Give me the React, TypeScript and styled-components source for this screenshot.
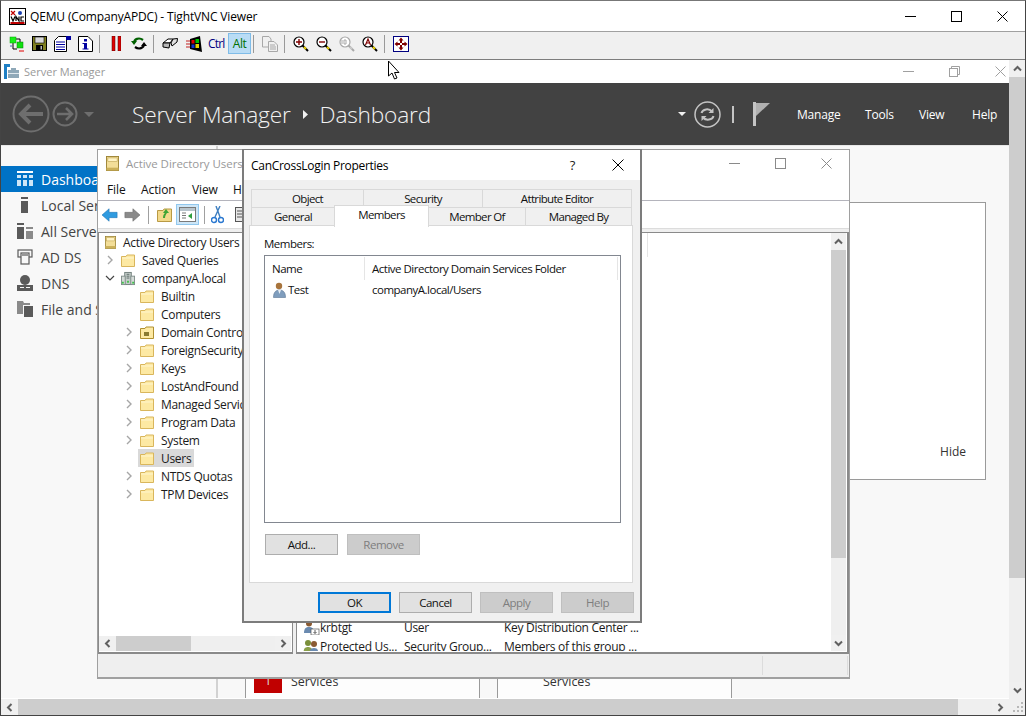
import * as React from "react";
import styled, { createGlobalStyle } from "styled-components";

const UI = `"Open Sans", "Noto Sans", "Liberation Sans", sans-serif`;

const Global = createGlobalStyle`
  html, body { margin: 0; padding: 0; background: #fff; overflow: hidden; }
  body { font-family: ${UI}; color: #1a1a1a; }
  * { box-sizing: border-box; }
`;

const Viewer = styled.div`
  position: relative;
  width: 1026px;
  height: 716px;
  display: flex;
  flex-direction: column;
  overflow: hidden;
  background: #fff;
  border: 1px solid #444;
  border-top-color: #777;
`;

const ViewerTitle = styled.div`
  height: 31px;
  flex: none;
  display: flex;
  align-items: center;
  padding-left: 8px;
  gap: 4px;
  background: #fff;
  border-bottom: 1px solid #a0a0a0;
`;

const ViewerTitleText = styled.span`
  font-size: 12px;
  letter-spacing: -0.15px;
  color: #000;
  flex: 1;
  white-space: nowrap;
`;

const Caption = styled.div`
  display: flex;
  align-items: center;
`;

const SmCaption = styled(Caption)`
  margin-right: -14px;
`;

const CaptionButton = styled.div<{ $w: number }>`
  width: ${(p) => p.$w}px;
  display: flex;
  justify-content: center;
  align-items: center;
`;

const VncBar = styled.div`
  height: 28px;
  flex: none;
  display: flex;
  align-items: center;
  padding: 0 0 4px 8px;
  background: #f0f0f0;
  border-bottom: 1px solid #7d7d7d;
`;

const ToolSlot = styled.div<{ $w?: number }>`
  width: ${(p) => p.$w ?? 23}px;
  height: 20px;
  flex: none;
  display: flex;
  align-items: center;
  justify-content: flex-start;
`;

const ToolSep = styled.div`
  width: 1px;
  height: 18px;
  background: #999;
  flex: none;
  margin-right: 8px;
`;

const KeyLabel = styled.span<{ $on?: boolean }>`
  font-size: 12px;
  letter-spacing: ${(p) => (p.$on ? "-0.5px" : "-0.8px")};
  height: 21px;
  display: flex;
  align-items: center;
  justify-content: ${(p) => (p.$on ? "center" : "flex-start")};
  flex: none;
  width: ${(p) => (p.$on ? "23px" : "20px")};
  margin-right: ${(p) => (p.$on ? "2px" : "0")};
  color: ${(p) => (p.$on ? "#007000" : "#000080")};
  background: ${(p) => (p.$on ? "#b9dcf5" : "transparent")};
  border: ${(p) => (p.$on ? "1px solid #7fbce8" : "none")};
`;

const Remote = styled.div`
  flex: 1;
  min-height: 0;
  display: grid;
  grid-template-columns: 1fr 16px;
  grid-template-rows: 1fr 16px;
  background: #fff;
`;

const ServerManager = styled.div`
  min-width: 0;
  min-height: 0;
  display: flex;
  flex-direction: column;
`;

const SmTitle = styled.div`
  height: 23px;
  flex: none;
  display: flex;
  align-items: center;
  padding-left: 3px;
  gap: 5px;
  background: #fff;
`;

const SmTitleText = styled.span`
  font-size: 11px;
  color: #999;
  flex: 1;
`;

const SmHeader = styled.div`
  height: 62px;
  flex: none;
  display: flex;
  align-items: center;
  padding: 0 12px 0 11px;
  background: #424242;
  color: #fff;
`;

const Breadcrumb = styled.div`
  display: flex;
  align-items: center;
  margin-left: 38px;
  padding-top: 1px;
  gap: 12px;
  flex: 1;
  font-size: 22.7px;
  font-weight: 300;
  letter-spacing: -0.2px;
  color: #f2f2f2;
  white-space: nowrap;
`;

const HeaderGap = styled.span<{ $w: number }>`
  width: ${(p) => p.$w}px;
  flex: none;
`;

const HeaderMenu = styled.div<{ $w: number }>`
  width: ${(p) => p.$w}px;
  font-size: 12px;
  color: #fff;
  letter-spacing: -0.2px;
  flex: none;
`;

const HeaderDivider = styled.div`
  width: 2px;
  height: 17px;
  background: #c4c4c4;
  margin: 0 19px 0 11px;
  flex: none;
`;

const SmBody = styled.div`
  flex: 1;
  min-height: 0;
  display: flex;
  background: #f8f8f8;
  border-top: 1px solid #e8e8e8;
  border-bottom: 1px solid #fff;
`;

const Sidebar = styled.nav`
  width: 217px;
  flex: none;
  padding-top: 20px;
  border-right: 2px solid #d2d2d2;
`;

const SideItem = styled.div<{ $active?: boolean }>`
  height: 26px;
  display: flex;
  align-items: center;
  gap: 7px;
  padding-left: 16px;
  font-size: 14px;
  white-space: nowrap;
  overflow: hidden;
  color: ${(p) => (p.$active ? "#fff" : "#444")};
  background: ${(p) => (p.$active ? "#0072c6" : "transparent")};
`;

const MainArea = styled.main`
  flex: 1;
  min-width: 0;
  display: flex;
  flex-direction: column;
  padding: 56px 23px 0 0;
`;

const WhitePanel = styled.div`
  height: 278px;
  flex: none;
  background: #fff;
  border: 1px solid #9a9a9a;
  display: flex;
  align-items: flex-end;
  justify-content: flex-end;
  padding: 0 19px 19px 0;
`;

const HideLabel = styled.span`
  font-size: 12px;
  color: #333;
`;

const Cards = styled.div`
  margin-top: auto;
  display: flex;
  padding-left: 27px;
  gap: 17px;
`;

const Card = styled.div<{ $plain?: boolean }>`
  width: 235px;
  height: 30px;
  display: flex;
  align-items: flex-end;
  gap: 9px;
  padding-left: ${(p) => (p.$plain ? "45px" : "8px")};
  padding-bottom: 5px;
  background: #fdfdfd;
  border: 1px solid #9a9a9a;
  border-width: 0 1px;
  font-size: 12.5px;
  color: #333;
`;

const CardLabel = styled.span`
  padding-bottom: 3px;
`;

const RedTile = styled.div`
  width: 28px;
  height: 21px;
  background: #c00000;
  color: #ddd;
  font-size: 12px;
  text-align: center;
  line-height: 18px;
`;

const ScrollV = styled.div<{ $w?: number }>`
  width: ${(p) => p.$w ?? 16}px;
  flex: none;
  display: flex;
  flex-direction: column;
  background: #efefef;
`;

const ScrollH = styled.div<{ $h?: number }>`
  height: ${(p) => p.$h ?? 16}px;
  flex: none;
  display: flex;
  align-items: stretch;
  background: #efefef;
`;

const ArrowBox = styled.div<{ $w?: number; $h?: number }>`
  width: ${(p) => p.$w ?? 17}px;
  height: ${(p) => p.$h ?? 16}px;
  flex: none;
  display: flex;
  align-items: center;
  justify-content: center;
  background: #f0f0f0;
`;

const Thumb = styled.div<{ $len: number; $horizontal?: boolean }>`
  flex: none;
  background: #cdcdcd;
  ${(p) => (p.$horizontal ? `width: ${p.$len}px;` : `height: ${p.$len}px;`)}
`;

const Spacer = styled.div`
  flex: 1;
  min-width: 0;
  min-height: 0;
`;

const Corner = styled.div`
  background: #f0f0f0;
  display: flex;
  align-items: flex-end;
  justify-content: flex-end;
  padding: 2px 1px;
`;

/* windows on the remote desktop */
const AdWindow = styled.div`
  position: absolute;
  left: 96px;
  top: 148px;
  width: 753px;
  height: 530px;
  background: #fff;
  border: 2px solid #a0a0a0;
  border-width: 1px 1px 2px 1px;
  display: flex;
  flex-direction: column;
`;

const AdTitle = styled.div`
  height: 28px;
  flex: none;
  display: flex;
  align-items: center;
  padding: 0 0 2px 8px;
  gap: 7px;
`;

const AdTitleText = styled.span`
  flex: 1;
  font-size: 11.5px;
  letter-spacing: -0.05px;
  color: #999;
`;

const AdMenu = styled.div`
  height: 23px;
  flex: none;
  display: flex;
  align-items: center;
  padding-left: 9px;
  font-size: 12px;
  color: #111;
  border-bottom: 1px solid #b4b4bc;
`;

const AdMenuItem = styled.span<{ $w: number }>`
  width: ${(p) => p.$w}px;
  flex: none;
  letter-spacing: -0.1px;
`;

const AdTools = styled.div`
  height: 28px;
  flex: none;
  display: flex;
  align-items: center;
  padding-left: 4px;
  border-bottom: 1px solid #dcdcdc;
`;

const AdSlot = styled.div<{ $w: number }>`
  width: ${(p) => p.$w}px;
  flex: none;
  display: flex;
  align-items: center;
`;

const AdToolSep = styled.div<{ $after: number }>`
  width: 1px;
  height: 18px;
  flex: none;
  background: #a0a0a0;
  margin-right: ${(p) => p.$after}px;
`;

const AdToolOn = styled.div`
  width: 23px;
  height: 21px;
  flex: none;
  margin-right: 5px;
  background: #cde6f7;
  border: 1px solid #92c8ee;
  display: flex;
  align-items: center;
  justify-content: center;
`;

const AdPanes = styled.div`
  height: 425px;
  flex: none;
  display: flex;
  gap: 3px;
  padding-top: 3px;
  background: #efefef;
`;

const TreePane = styled.div`
  width: 195px;
  flex: none;
  display: flex;
  flex-direction: column;
  background: #fff;
  border: 1px solid #8a8a8a;
  border-width: 1px 1px 2px 1px;
  padding: 0 1px 1px 0;
  overflow: hidden;
`;

const TreeRows = styled.div`
  flex: 1;
  min-height: 0;
`;

const TreeRow = styled.div<{ $level: number }>`
  height: 18px;
  display: flex;
  align-items: center;
  padding-left: ${(p) => 6 + p.$level * 19}px;
  font-size: 12px;
  letter-spacing: -0.3px;
  color: #1a1a1a;
  white-space: nowrap;
`;

const TreeTwist = styled.span`
  width: 16px;
  height: 14px;
  flex: none;
  display: flex;
  align-items: center;
  justify-content: flex-start;
`;

const TreeBody = styled.span<{ $selected?: boolean }>`
  display: flex;
  align-items: center;
  gap: 7px;
  height: 18px;
  padding: 0 3px 0 2px;
  margin-left: -2px;
  background: ${(p) => (p.$selected ? "#d9d9d9" : "transparent")};
`;

const ListPane = styled.div`
  flex: 1;
  min-width: 0;
  display: flex;
  background: #fff;
  border: 1px solid #8a8a8a;
  border-width: 1px 2px 2px 1px;
  padding: 0 1px 1px 0;
`;

const ListRows = styled.div`
  flex: 1;
  min-width: 0;
  display: flex;
  flex-direction: column;
  overflow: hidden;
`;

const ListHeader = styled.div`
  height: 24px;
  flex: none;
  width: 351px;
  margin-bottom: 361px;
  border-right: 1px solid #e5e5e5;
`;

const ListRow = styled.div`
  height: 19px;
  flex: none;
  display: grid;
  grid-template-columns: 107px 100px 1fr;
  align-items: center;
  font-size: 12px;
  letter-spacing: -0.3px;
  color: #1a1a1a;
  white-space: nowrap;
`;

const ListName = styled.span`
  display: flex;
  align-items: center;
  padding-left: 6px;
`;

const AdStatus = styled.div`
  height: 23px;
  flex: none;
  display: flex;
  justify-content: flex-end;
  background: #efefef;
  padding: 2px 1px 2px 0;
`;

const StatusCell = styled.div<{ $w: number }>`
  width: ${(p) => p.$w}px;
  border-left: 1px solid #dcdcdc;
  border-right: 1px solid #dcdcdc;
`;

const Dialog = styled.div`
  position: absolute;
  left: 241px;
  top: 148px;
  width: 400px;
  height: 474px;
  background: #f0f0f0;
  border: 2px solid #7c7c7c;
  border-width: 1px 2px 2px 2px;
  display: flex;
  flex-direction: column;
`;

const DialogTitle = styled.div`
  height: 30px;
  flex: none;
  display: flex;
  align-items: center;
  padding-left: 7px;
  background: #fff;
`;

const DialogTitleText = styled.span`
  flex: 1;
  font-size: 12px;
  letter-spacing: -0.3px;
  color: #000;
`;

const Question = styled.span`
  width: 44px;
  text-align: center;
  margin-right: 2px;
  padding-left: 1px;
  font-size: 13px;
  color: #222;
`;

const TabsArea = styled.div`
  height: 45px;
  flex: none;
  padding: 9px 0 0 7px;
`;

const TabRow = styled.div`
  display: flex;
  height: 18px;
`;

const Tab = styled.div<{ $w: number; $active?: boolean }>`
  width: ${(p) => p.$w}px;
  flex: none;
  height: ${(p) => (p.$active ? "22px" : "19px")};
  margin-top: ${(p) => (p.$active ? "-2px" : "0")};
  margin-right: -1px;
  padding: ${(p) => (p.$active ? "1px 0 0" : "0 0 1px")};
  display: flex;
  align-items: ${(p) => (p.$active ? "flex-start" : "center")};
  justify-content: center;
  font-size: 11.5px;
  letter-spacing: -0.65px;
  color: #111;
  background: ${(p) => (p.$active ? "#fff" : "#f0f0f0")};
  border: 1px solid #d9d9d9;
  border-bottom: ${(p) => (p.$active ? "none" : "1px solid #d9d9d9")};
  position: relative;
  z-index: ${(p) => (p.$active ? 2 : 1)};
`;

const TabPage = styled.div`
  height: 358px;
  flex: none;
  margin: 0 7px 0 5px;
  background: #fff;
  border: 1px solid #d9d9d9;
  padding: 9px 11px 0 14px;
  display: flex;
  flex-direction: column;
  font-size: 11.5px;
  letter-spacing: -0.5px;
  color: #111;
`;

const MembersLabel = styled.div`
  height: 20px;
  flex: none;
  line-height: 18px;
`;

const MembersBox = styled.div`
  height: 268px;
  flex: none;
  border: 1px solid #828790;
  padding: 1px;
  display: flex;
  flex-direction: column;
`;

const MembersHeader = styled.div`
  display: grid;
  grid-template-columns: 99px 1fr;
  height: 23px;
  align-items: center;
  padding-right: 1px;
`;

const HeaderCell = styled.div<{ $pad: number }>`
  height: 23px;
  display: flex;
  align-items: center;
  padding-left: ${(p) => p.$pad}px;
  border-right: 1px solid #e5e5e5;
`;

const MemberRow = styled.div`
  display: grid;
  grid-template-columns: 99px 1fr;
  height: 19px;
  align-items: center;
`;

const MemberName = styled.div`
  display: flex;
  align-items: center;
  gap: 2px;
  padding-left: 7px;
`;

const MemberFolder = styled.div`
  padding-left: 7px;
`;

const PageButtons = styled.div`
  display: flex;
  gap: 9px;
  margin: 11px 0 0 1px;
`;

const DialogButtons = styled.div`
  flex: 1;
  display: flex;
  justify-content: flex-end;
  align-items: flex-start;
  gap: 8px;
  padding: 9px 6px 0 0;
`;

const Btn = styled.div<{ $disabled?: boolean; $default?: boolean }>`
  width: 73px;
  height: 21px;
  display: flex;
  align-items: center;
  justify-content: center;
  font-size: 11.5px;
  letter-spacing: -0.5px;
  color: ${(p) => (p.$disabled ? "#7e7e7e" : "#111")};
  background: ${(p) => (p.$disabled ? "#cccccc" : "#e1e1e1")};
  border: ${(p) =>
    p.$default ? "2px solid #0078d7" : p.$disabled ? "1px solid #bfbfbf" : "1px solid #adadad"};
`;

const CursorMark = styled.svg`
  position: absolute;
  left: 386px;
  top: 59px;
`;

const ChevronSvg = styled.svg<{ $rot: number }>`
  transform: rotate(${(p) => p.$rot}deg);
`;

type GlyphProps = { dir: "up" | "down" | "left" | "right" };

const Chevron = ({ dir }: GlyphProps) => {
  const rot = { up: 0, right: 90, down: 180, left: 270 }[dir];
  return (
    <ChevronSvg $rot={rot} width="9" height="9" viewBox="0 0 9 9">
      <path d="M1 6.5 L4.5 3 L8 6.5" fill="none" stroke="#606060" strokeWidth="2" />
    </ChevronSvg>
  );
};

const Twist = ({ open }: { open?: boolean }) => (
  <svg width="10" height="10" viewBox="0 0 10 10">
    {open ? (
      <path d="M1 3 L5 7 L9 3" fill="none" stroke="#444" strokeWidth="1.2" />
    ) : (
      <path d="M3 1 L7 5 L3 9" fill="none" stroke="#a6a6a6" strokeWidth="1.4" />
    )}
  </svg>
);

const Folder = () => (
  <svg width="14" height="13" viewBox="0 0 14 13">
    <path d="M.5 2.5 H5 L6 1 H13.5 V12.5 H.5 Z" fill="#fde9a3" stroke="#d9b65c" />
    <path d="M1 4 H13" stroke="#fff6d0" />
  </svg>
);

const SpecialFolder = () => (
  <svg width="14" height="13" viewBox="0 0 14 13">
    <path d="M.5 2.5 H5 L6 1 H13.5 V12.5 H.5 Z" fill="#fde9a3" stroke="#b09030" />
    <rect x="4" y="6" width="5" height="4" fill="#8a7a30" />
  </svg>
);

const AdBook = ({ size = 14 }: { size?: number }) => (
  <svg width={size} height={size + 2} viewBox="0 0 14 16">
    <rect x=".5" y=".5" width="13" height="15" fill="#f3de98" stroke="#9a8232" />
    <rect x="2" y="2" width="10" height="4" fill="#fff3c4" stroke="#b79a45" strokeWidth=".6" />
    <rect x=".5" y="12.5" width="13" height="3" fill="#cbb059" />
  </svg>
);

const Domain = () => (
  <svg width="14" height="15" viewBox="0 0 15 15">
    <rect x="4" y="1" width="7" height="13" fill="#c4ccc9" stroke="#6f7e7a" />
    <rect x="0.5" y="5" width="4" height="9" fill="#d5dbd8" stroke="#7f8d89" />
    <rect x="10.5" y="5" width="4" height="9" fill="#d5dbd8" stroke="#7f8d89" />
    <path d="M6 3h3M6 5h3M6 7h3" stroke="#5a6a66" />
    <rect x="1" y="11" width="2" height="2" fill="#3fc34a" />
    <rect x="12" y="11" width="2" height="2" fill="#3fc34a" />
    <rect x="6.5" y="10" width="2" height="2" fill="#3fc34a" />
  </svg>
);

const UserGlyph = () => (
  <svg width="13" height="16" viewBox="0 0 13 16">
    <circle cx="6" cy="4" r="3.2" fill="#a8743c" />
    <path d="M.5 15.5 C.5 10 3 8 6.5 8 C10 8 12.5 10 12.5 15.5 Z" fill="#7f9dbd" stroke="#5b7594" strokeWidth=".6" />
    <path d="M5 8 L6.5 12 L8 8 Z" fill="#e8eef5" />
  </svg>
);

const KrbIcon = () => (
  <svg width="17" height="15" viewBox="0 0 17 15">
    <circle cx="6" cy="3.5" r="3" fill="#8a5a32" />
    <path d="M1 13 C1 8.5 3 7 6 7 C9 7 11 8.5 11 13 Z" fill="#6a8ab0" />
    <rect x="8" y="9" width="8" height="6" fill="#fff" stroke="#555" strokeWidth=".7" />
    <path d="M12 10 V13 M10.5 12 L12 13.6 L13.5 12" stroke="#333" fill="none" strokeWidth=".8" />
  </svg>
);

const GroupIcon = () => (
  <svg width="17" height="15" viewBox="0 0 17 15">
    <circle cx="5" cy="4" r="3" fill="#7a8f3a" />
    <path d="M0.5 14 C0.5 9 2.5 8 5 8 C7.5 8 9.5 9 9.5 14 Z" fill="#8aa04a" />
    <circle cx="11" cy="5" r="3" fill="#8a5a32" />
    <path d="M6.5 15 C6.5 10 8.5 9 11 9 C13.5 9 15.5 10 15.5 15 Z" fill="#6a8ab0" />
  </svg>
);

const VncLogo = () => (
  <svg width="17" height="17" viewBox="0 0 17 17">
    <rect x=".5" y=".5" width="16" height="16" fill="#fff" stroke="#000" />
    <rect x="1.5" y="14" width="14" height="2" fill="#c00000" />
    <circle cx="11" cy="5" r="2" fill="#1a3fb0" />
    <path d="M2 3 L6 7 M6 3 L2 7" stroke="#c00000" strokeWidth="1.2" />
    <path d="M2 8.5 L4 13 L6 8.5 M7 13 V8.5 L10 13 V8.5 M15 9 H12 V13 H15" fill="none" stroke="#000" strokeWidth="1.2" />
  </svg>
);

const ConnectIcon = () => (
  <svg width="16" height="16" viewBox="0 0 16 16">
    <path d="M7 3 H11 V6 M4 7 V13 H8" fill="none" stroke="#000" />
    <rect x="1" y="1" width="6" height="6" fill="#18f018" stroke="#00a000" strokeWidth=".5" />
    <rect x="8" y="6" width="6" height="6" fill="#10e010" stroke="#008000" strokeWidth=".5" />
    <path d="M10 15 H15" stroke="#e00000" />
    <path d="M1 10 H3" stroke="#4060c0" />
  </svg>
);

const SaveIcon = () => (
  <svg width="15" height="15" viewBox="0 0 15 15">
    <rect x=".5" y=".5" width="14" height="14" fill="#7f7f20" stroke="#000" />
    <rect x="3" y="1" width="9" height="6" fill="#d8d8d8" stroke="#000" strokeWidth=".6" />
    <rect x="4" y="9" width="7" height="5.5" fill="#000" />
    <rect x="8.5" y="10" width="1.5" height="3.5" fill="#bbb" />
  </svg>
);

const OptionsIcon = () => (
  <svg width="17" height="16" viewBox="0 0 17 16">
    <path d="M.5 4.5 L4.5 .5 H12.5 V15.5 H.5 Z" fill="#fff" stroke="#000" />
    <path d="M2 6 H11 M2 8.5 H11 M2 11 H11 M2 13.5 H11" stroke="#0000a0" />
    <rect x="12" y="0" width="5" height="4" fill="#0000a0" />
  </svg>
);

const InfoIcon = () => (
  <svg width="15" height="16" viewBox="0 0 15 16">
    <path d="M.5 .5 H10 L14.5 5 V15.5 H.5 Z" fill="#fff" stroke="#000" />
    <rect x="6" y="3" width="3" height="2.5" fill="#0000a0" />
    <path d="M4.5 7 H9 V12.5 H10.5 V13.5 H4.5 V12.5 H6 V8 H4.5 Z" fill="#0000a0" />
  </svg>
);

const PauseIcon = () => (
  <svg width="13" height="15" viewBox="0 0 13 15">
    <rect x="4" y="0" width="3" height="15" fill="#e00000" stroke="#400" strokeWidth=".5" />
    <rect x="10" y="0" width="3" height="15" fill="#e00000" stroke="#400" strokeWidth=".5" />
  </svg>
);

const RefreshIcon = () => (
  <svg width="16" height="15" viewBox="0 0 16 15">
    <path d="M3 7 C3 3 8 1 12 4" fill="none" stroke="#006000" strokeWidth="2.2" />
    <path d="M0 5 L3 9 L6 5 Z" fill="#006000" />
    <path d="M13 8 C13 12 8 14 4 11" fill="none" stroke="#000" strokeWidth="2.2" />
    <path d="M10 10 L13 6 L16 10 Z" fill="#000" />
  </svg>
);

const CadIcon = () => (
  <svg width="16" height="13" viewBox="0 0 16 13">
    <path d="M1 6 L6 2 L11 2 L8 6 Z" fill="#fff" stroke="#000" />
    <path d="M1 6 V10 L7 11 L8 6 Z" fill="#b8b8b8" stroke="#000" />
    <path d="M9 6 L11 2 L15.5 1.5 L15 5 L10 9 Z" fill="#e0e0e0" stroke="#000" />
  </svg>
);

const WinIcon = () => (
  <svg width="16" height="16" viewBox="0 0 16 16">
    <path d="M4 3 L14 0 L16 16 L4 13 Z" fill="#000" />
    <rect x="5.5" y="4" width="3" height="3.5" fill="#e00000" />
    <rect x="9.5" y="3" width="3.5" height="4" fill="#00c000" />
    <rect x="5.5" y="8.5" width="3" height="3.5" fill="#1030d0" />
    <rect x="9.5" y="8" width="3.5" height="4" fill="#e8d000" />
    <path d="M0 5 H4 M0 8 H4 M0 11 H4" stroke="#c02020" />
  </svg>
);

const CopyIcon = () => (
  <svg width="16" height="16" viewBox="0 0 16 16" fill="#f0f0f0" stroke="#a8a8a8">
    <path d="M.5 .5 H7 L9 3 V11 H.5 Z" />
    <path d="M6.5 5.5 H12 L15.5 9 V15.5 H6.5 Z" />
    <path d="M8 9 H13 M8 11 H14 M8 13 H14" />
  </svg>
);

const ZoomIcon = ({ sign, muted }: { sign: "+" | "-" | "100" | "A"; muted?: boolean }) => {
  const lens = muted ? "#a8a8a8" : "#000";
  const accent = muted ? "#a8a8a8" : "#800000";
  return (
    <svg width="16" height="16" viewBox="0 0 16 16">
      <circle cx="6" cy="6" r="5" fill="#fff" stroke={lens} strokeWidth="1.2" />
      <path d="M9.5 9.5 L15 15" stroke={muted ? "#a8a8a8" : "#000"} strokeWidth="2" />
      <path d="M11 11 L13 13" stroke={muted ? "#c8c8c8" : "#e8d000"} strokeWidth="2" />
      {sign === "+" && <path d="M3 6 H9 M6 3 V9" stroke={accent} strokeWidth="1.4" />}
      {sign === "-" && <path d="M3 6 H9" stroke={accent} strokeWidth="1.4" />}
      {sign === "100" && <path d="M3 4 V8 M5 4 H7 V8 H5 Z" stroke={accent} fill="none" />}
      {sign === "A" && <path d="M3.5 9 L6 3 L8.5 9 M4.5 7 H7.5" stroke={accent} fill="none" strokeWidth="1.2" />}
    </svg>
  );
};

const FullIcon = () => (
  <svg width="16" height="16" viewBox="0 0 16 16">
    <rect x=".5" y=".5" width="15" height="15" fill="#fff" stroke="#000080" />
    <path d="M8 1.5 L10.5 4.5 H9 V7 H7 V4.5 H5.5 Z" fill="#800000" />
    <path d="M8 14.5 L10.5 11.5 H9 V9 H7 V11.5 H5.5 Z" fill="#800000" />
    <path d="M1.5 8 L4.5 5.5 V7 H7 V9 H4.5 V10.5 Z" fill="#800000" />
    <path d="M14.5 8 L11.5 5.5 V7 H9 V9 H11.5 V10.5 Z" fill="#800000" />
  </svg>
);

const SmIcon = () => (
  <svg width="15" height="15" viewBox="0 0 15 15">
    <rect x="0" y="0" width="6" height="3" fill="#1f7fc4" />
    <rect x="0" y="3" width="3" height="12" fill="#1f7fc4" />
    <rect x="4" y="6" width="11" height="8" fill="#8fa8b8" />
    <rect x="7" y="4" width="5" height="2" fill="#8fa8b8" />
    <rect x="4" y="9" width="11" height="1" fill="#dfe8ee" />
  </svg>
);

const WinMin = ({ color }: { color: string }) => (
  <svg width="11" height="11" viewBox="0 0 11 11">
    <path d="M0 5.5 H11" stroke={color} />
  </svg>
);

const WinMax = ({ color }: { color: string }) => (
  <svg width="11" height="11" viewBox="0 0 11 11">
    <rect x=".5" y=".5" width="10" height="10" fill="none" stroke={color} />
  </svg>
);

const WinRestore = ({ color }: { color: string }) => (
  <svg width="11" height="11" viewBox="0 0 11 11" fill="none" stroke={color}>
    <rect x=".5" y="2.5" width="8" height="8" />
    <path d="M2.5 2.5 V.5 H10.5 V8.5 H8.5" />
  </svg>
);

const WinClose = ({ color }: { color: string }) => (
  <svg width="11" height="11" viewBox="0 0 11 11">
    <path d="M.5 .5 L10.5 10.5 M10.5 .5 L.5 10.5" stroke={color} />
  </svg>
);

const NavBack = () => (
  <svg width="38" height="38" viewBox="0 0 38 38" fill="none" stroke="#6e6e6e">
    <circle cx="19" cy="19" r="17.5" strokeWidth="2" />
    <path d="M31 19 H10 M18 10 L9 19 L18 28" strokeWidth="4" />
  </svg>
);

const NavForward = () => (
  <svg width="26" height="26" viewBox="0 0 26 26" fill="none" stroke="#6e6e6e">
    <circle cx="13" cy="13" r="11.5" strokeWidth="2" />
    <path d="M5 13 H20 M14 7 L20 13 L14 19" strokeWidth="2.6" />
  </svg>
);

const DropTri = ({ color, w }: { color: string; w: number }) => (
  <svg width={w} height={w / 2} viewBox="0 0 10 5">
    <path d="M0 0 H10 L5 5 Z" fill={color} />
  </svg>
);

const CrumbArrow = () => (
  <svg width="5" height="9" viewBox="0 0 5 9">
    <path d="M0 0 L5 4.5 L0 9 Z" fill="#f2f2f2" />
  </svg>
);

const RefreshRing = () => (
  <svg width="27" height="27" viewBox="0 0 27 27" fill="none">
    <circle cx="13.5" cy="13.5" r="12.5" stroke="#c4c4c4" strokeWidth="1.5" />
    <path d="M7.5 12 C8.5 8 15 7 18 10.5" stroke="#c4c4c4" strokeWidth="2" />
    <path d="M19.5 15 C18.5 19 12 20 9 16.5" stroke="#c4c4c4" strokeWidth="2" />
    <path d="M19.5 7 V12 H14.5 Z M7.5 20 V15 H12.5 Z" fill="#c4c4c4" />
  </svg>
);

const FlagIcon = () => (
  <svg width="17" height="24" viewBox="0 0 17 24">
    <rect x="0" y="0" width="3" height="24" fill="#c4c4c4" />
    <path d="M3 1 H17 L3 14 Z" fill="#b0b0b0" />
  </svg>
);

const NavIcon = ({ kind }: { kind: string }) => {
  const dark = "#5a5a5a";
  return (
    <svg width="17" height="16" viewBox="0 0 17 16">
      {kind === "dash" && (
        <g fill="#cfe6f7">
          <rect x="0" y="0" width="16" height="2" fill="#fff" />
          <rect x="0" y="4" width="4" height="3" />
          <rect x="6" y="4" width="4" height="3" />
          <rect x="12" y="4" width="4" height="3" />
          <rect x="0" y="9" width="4" height="6" />
          <rect x="6" y="9" width="4" height="6" />
          <rect x="12" y="9" width="4" height="6" />
        </g>
      )}
      {kind === "local" && (
        <g fill={dark}>
          <rect x="4" y="0" width="7" height="2" />
          <rect x="4" y="4" width="7" height="12" />
        </g>
      )}
      {kind === "all" && (
        <g fill={dark}>
          <rect x="0" y="0" width="7" height="2" />
          <rect x="0" y="4" width="7" height="12" />
          <rect x="9" y="4" width="7" height="2" fill="#8a8a8a" />
          <rect x="9" y="8" width="7" height="8" fill="#8a8a8a" />
        </g>
      )}
      {kind === "ad" && (
        <g fill="none" stroke={dark} strokeWidth="1.2">
          <rect x="1" y="1" width="14" height="7" />
          <rect x="4" y="4" width="8" height="11" fill="#f8f8f8" />
          <path d="M5 6 H11" />
        </g>
      )}
      {kind === "dns" && (
        <g fill={dark}>
          <circle cx="8" cy="5" r="5" />
          <rect x="0" y="10" width="16" height="6" />
          <rect x="3" y="12" width="4" height="1" fill="#f8f8f8" />
          <rect x="9" y="12" width="4" height="1" fill="#f8f8f8" />
        </g>
      )}
      {kind === "file" && (
        <g fill={dark}>
          <path d="M0 0 H6 L7 2 H13 V4 H6 V13 H0 Z" fill="#8a8a8a" />
          <rect x="7" y="5" width="9" height="11" />
        </g>
      )}
    </svg>
  );
};

const BackArrow = () => (
  <svg width="16" height="14" viewBox="0 0 18 14">
    <path d="M8 0 L0 7 L8 14 V10 H17 V4 H8 Z" fill="#2f9be0" stroke="#1d6fb0" strokeWidth=".6" />
  </svg>
);

const ForwardArrow = () => (
  <svg width="16" height="14" viewBox="0 0 18 14">
    <path d="M10 0 L18 7 L10 14 V10 H1 V4 H10 Z" fill="#8a8a8a" stroke="#666" strokeWidth=".6" />
  </svg>
);

const UpFolder = () => (
  <svg width="15" height="15" viewBox="0 0 15 15">
    <path d="M.5 3.5 H6 L7 2 H14.5 V14.5 H.5 Z" fill="#f3d98a" stroke="#b99a45" />
    <path d="M6 11 C6 8 7 7 8 6 L6 6 L9 2 L12 6 L10 6 C9 7 8 9 8 11 Z" fill="#3fa535" />
  </svg>
);

const TreeToggle = () => (
  <svg width="17" height="15" viewBox="0 0 17 15">
    <rect x=".5" y=".5" width="16" height="14" fill="#fff" stroke="#7a7a7a" />
    <rect x="1" y="1" width="15" height="3" fill="#b8c4cc" />
    <path d="M3 6 H7 M3 8.5 H7 M3 11 H7" stroke="#777" />
    <path d="M13 6 V12 L9 9 Z" fill="#2e9e3e" />
  </svg>
);

const CutIcon = () => (
  <svg width="13" height="18" viewBox="0 0 13 18">
    <path d="M9 0 L4 11 M5 0 L9 11" stroke="#3f7fc0" strokeWidth="1.4" />
    <circle cx="3" cy="14" r="2.5" fill="none" stroke="#2a78d0" strokeWidth="1.4" />
    <circle cx="10" cy="14" r="2.5" fill="none" stroke="#2a78d0" strokeWidth="1.4" />
  </svg>
);

const ClipIcon = () => (
  <svg width="13" height="15" viewBox="0 0 13 15">
    <rect x=".5" y=".5" width="12" height="14" fill="#e8e8e8" stroke="#555" />
    <path d="M2 4 H11 M2 7 H11 M2 10 H11" stroke="#555" />
  </svg>
);

type TreeItem = {
  label: string;
  level: number;
  twist?: "open" | "closed";
  icon?: "book" | "domain" | "special";
  selected?: boolean;
  root?: boolean;
};

const treeItems: TreeItem[] = [
  { label: "Active Directory Users and C", level: 0, icon: "book", root: true },
  { label: "Saved Queries", level: 0, twist: "closed" },
  { label: "companyA.local", level: 0, twist: "open", icon: "domain" },
  { label: "Builtin", level: 1 },
  { label: "Computers", level: 1 },
  { label: "Domain Controllers", level: 1, twist: "closed", icon: "special" },
  { label: "ForeignSecurityPrinc", level: 1, twist: "closed" },
  { label: "Keys", level: 1, twist: "closed" },
  { label: "LostAndFound", level: 1, twist: "closed" },
  { label: "Managed Service Acc", level: 1, twist: "closed" },
  { label: "Program Data", level: 1, twist: "closed" },
  { label: "System", level: 1, twist: "closed" },
  { label: "Users", level: 1, selected: true },
  { label: "NTDS Quotas", level: 1, twist: "closed" },
  { label: "TPM Devices", level: 1, twist: "closed" },
];

const treeIcon = (item: TreeItem) => {
  if (item.icon === "book") return <AdBook size={11} />;
  if (item.icon === "domain") return <Domain />;
  if (item.icon === "special") return <SpecialFolder />;
  return <Folder />;
};

const sideItems = [
  { kind: "dash", label: "Dashboard" },
  { kind: "local", label: "Local Server" },
  { kind: "all", label: "All Servers" },
  { kind: "ad", label: "AD DS" },
  { kind: "dns", label: "DNS" },
  { kind: "file", label: "File and Storage" },
];

export default function App() {
  return (
    <>
      <Global />
      <Viewer>
        <ViewerTitle>
          <VncLogo />
          <ViewerTitleText>QEMU (CompanyAPDC) - TightVNC Viewer</ViewerTitleText>
          <Caption>
            <CaptionButton $w={46}><WinMin color="#000" /></CaptionButton>
            <CaptionButton $w={46}><WinMax color="#000" /></CaptionButton>
            <CaptionButton $w={46}><WinClose color="#000" /></CaptionButton>
          </Caption>
        </ViewerTitle>

        <VncBar>
          <ToolSlot><ConnectIcon /></ToolSlot>
          <ToolSlot $w={22}><SaveIcon /></ToolSlot>
          <ToolSlot $w={24}><OptionsIcon /></ToolSlot>
          <ToolSlot $w={21}><InfoIcon /></ToolSlot>
          <ToolSep />
          <ToolSlot><PauseIcon /></ToolSlot>
          <ToolSlot $w={22}><RefreshIcon /></ToolSlot>
          <ToolSep />
          <ToolSlot $w={24}><CadIcon /></ToolSlot>
          <ToolSlot $w={22}><WinIcon /></ToolSlot>
          <KeyLabel>Ctrl</KeyLabel>
          <KeyLabel $on>Alt</KeyLabel>
          <ToolSep />
          <ToolSlot $w={22}><CopyIcon /></ToolSlot>
          <ToolSep />
          <ToolSlot><ZoomIcon sign="+" /></ToolSlot>
          <ToolSlot><ZoomIcon sign="-" /></ToolSlot>
          <ToolSlot><ZoomIcon sign="100" muted /></ToolSlot>
          <ToolSlot $w={22}><ZoomIcon sign="A" /></ToolSlot>
          <ToolSep />
          <ToolSlot><FullIcon /></ToolSlot>
        </VncBar>

        <Remote>
          <ServerManager>
            <SmTitle>
              <SmIcon />
              <SmTitleText>Server Manager</SmTitleText>
              <SmCaption>
                <CaptionButton $w={46}><WinMin color="#a0a0a0" /></CaptionButton>
                <CaptionButton $w={46}><WinRestore color="#a0a0a0" /></CaptionButton>
                <CaptionButton $w={46}><WinClose color="#a0a0a0" /></CaptionButton>
              </SmCaption>
            </SmTitle>

            <SmHeader>
              <NavBack />
              <HeaderGap $w={2} />
              <NavForward />
              <HeaderGap $w={6} />
              <DropTri color="#6e6e6e" w={10} />
              <Breadcrumb>
                <span>Server Manager</span>
                <CrumbArrow />
                <span>Dashboard</span>
              </Breadcrumb>
              <DropTri color="#f0f0f0" w={8} />
              <HeaderGap $w={8} />
              <RefreshRing />
              <HeaderDivider />
              <FlagIcon />
              <HeaderGap $w={27} />
              <HeaderMenu $w={68}>Manage</HeaderMenu>
              <HeaderMenu $w={54}>Tools</HeaderMenu>
              <HeaderMenu $w={53}>View</HeaderMenu>
              <HeaderMenu $w={25}>Help</HeaderMenu>
            </SmHeader>

            <SmBody>
              <Sidebar>
                {sideItems.map((it) => (
                  <SideItem key={it.label} $active={it.kind === "dash"}>
                    <NavIcon kind={it.kind} />
                    {it.label}
                  </SideItem>
                ))}
              </Sidebar>
              <MainArea>
                <WhitePanel>
                  <HideLabel>Hide</HideLabel>
                </WhitePanel>
                <Cards>
                  <Card>
                    <RedTile>1</RedTile>
                    <CardLabel>Services</CardLabel>
                  </Card>
                  <Card $plain>
                    <CardLabel>Services</CardLabel>
                  </Card>
                </Cards>
              </MainArea>
            </SmBody>
          </ServerManager>

          <ScrollV>
            <ArrowBox $w={16} $h={17}><Chevron dir="up" /></ArrowBox>
            <Thumb $len={501} />
            <Spacer />
            <ArrowBox $w={16} $h={17}><Chevron dir="down" /></ArrowBox>
          </ScrollV>

          <ScrollH>
            <ArrowBox><Chevron dir="left" /></ArrowBox>
            <Thumb $len={940} $horizontal />
            <Spacer />
            <ArrowBox><Chevron dir="right" /></ArrowBox>
          </ScrollH>
          <Corner>
            <svg width="11" height="11" viewBox="0 0 11 11" fill="#b8b8b8">
              <rect x="8" y="0" width="2" height="2" />
              <rect x="4" y="4" width="2" height="2" />
              <rect x="8" y="4" width="2" height="2" />
              <rect x="0" y="8" width="2" height="2" />
              <rect x="4" y="8" width="2" height="2" />
              <rect x="8" y="8" width="2" height="2" />
            </svg>
          </Corner>
        </Remote>

        <AdWindow>
          <AdTitle>
            <AdBook size={13} />
            <AdTitleText>Active Directory Users and Computers</AdTitleText>
            <Caption>
              <CaptionButton $w={46}><WinMin color="#8a8a8a" /></CaptionButton>
              <CaptionButton $w={46}><WinMax color="#8a8a8a" /></CaptionButton>
              <CaptionButton $w={46}><WinClose color="#8a8a8a" /></CaptionButton>
            </Caption>
          </AdTitle>
          <AdMenu>
            <AdMenuItem $w={34}>File</AdMenuItem>
            <AdMenuItem $w={51}>Action</AdMenuItem>
            <AdMenuItem $w={41}>View</AdMenuItem>
            <AdMenuItem $w={40}>Help</AdMenuItem>
          </AdMenu>
          <AdTools>
            <AdSlot $w={22}><BackArrow /></AdSlot>
            <AdSlot $w={24}><ForwardArrow /></AdSlot>
            <AdToolSep $after={8} />
            <AdSlot $w={19}><UpFolder /></AdSlot>
            <AdToolOn><TreeToggle /></AdToolOn>
            <AdToolSep $after={6} />
            <AdSlot $w={24}><CutIcon /></AdSlot>
            <AdSlot $w={14}><ClipIcon /></AdSlot>
          </AdTools>
          <AdPanes>
            <TreePane>
              <TreeRows>
                {treeItems.map((item) => (
                  <TreeRow key={item.label} $level={item.level}>
                    {!item.root && (
                      <TreeTwist>
                        {item.twist && <Twist open={item.twist === "open"} />}
                      </TreeTwist>
                    )}
                    <TreeBody $selected={item.selected}>
                      {treeIcon(item)}
                      {item.label}
                    </TreeBody>
                  </TreeRow>
                ))}
              </TreeRows>
              <ScrollH $h={15}>
                <ArrowBox $h={15}><Chevron dir="left" /></ArrowBox>
                <Thumb $len={75} $horizontal />
                <Spacer />
                <ArrowBox $w={16} $h={15}><Chevron dir="right" /></ArrowBox>
              </ScrollH>
            </TreePane>
            <ListPane>
              <ListRows>
                <ListHeader />
                <ListRow>
                  <ListName><KrbIcon />krbtgt</ListName>
                  <span>User</span>
                  <span>Key Distribution Center ...</span>
                </ListRow>
                <ListRow>
                  <ListName><GroupIcon />Protected Us...</ListName>
                  <span>Security Group...</span>
                  <span>Members of this group ...</span>
                </ListRow>
              </ListRows>
              <ScrollV $w={15}>
                <ArrowBox $w={15} $h={17}><Chevron dir="up" /></ArrowBox>
                <Thumb $len={308} />
                <Spacer />
                <ArrowBox $w={15} $h={16}><Chevron dir="down" /></ArrowBox>
              </ScrollV>
            </ListPane>
          </AdPanes>
          <AdStatus>
            <StatusCell $w={86} />
          </AdStatus>
        </AdWindow>

        <Dialog>
          <DialogTitle>
            <DialogTitleText>CanCrossLogin Properties</DialogTitleText>
            <Question>?</Question>
            <CaptionButton $w={44}>
              <svg width="12" height="12" viewBox="0 0 12 12">
                <path d="M.5 .5 L11.5 11.5 M11.5 .5 L.5 11.5" stroke="#000" />
              </svg>
            </CaptionButton>
          </DialogTitle>
          <TabsArea>
            <TabRow>
              <Tab $w={113}>Object</Tab>
              <Tab $w={120}>Security</Tab>
              <Tab $w={150}>Attribute Editor</Tab>
            </TabRow>
            <TabRow>
              <Tab $w={84}>General</Tab>
              <Tab $w={95} $active>Members</Tab>
              <Tab $w={98}>Member Of</Tab>
              <Tab $w={107}>Managed By</Tab>
            </TabRow>
          </TabsArea>
          <TabPage>
            <MembersLabel>Members:</MembersLabel>
            <MembersBox>
              <MembersHeader>
                <HeaderCell $pad={6}>Name</HeaderCell>
                <HeaderCell $pad={7}>Active Directory Domain Services Folder</HeaderCell>
              </MembersHeader>
              <MemberRow>
                <MemberName>
                  <UserGlyph />
                  Test
                </MemberName>
                <MemberFolder>companyA.local/Users</MemberFolder>
              </MemberRow>
            </MembersBox>
            <PageButtons>
              <Btn>Add...</Btn>
              <Btn $disabled>Remove</Btn>
            </PageButtons>
          </TabPage>
          <DialogButtons>
            <Btn $default>OK</Btn>
            <Btn>Cancel</Btn>
            <Btn $disabled>Apply</Btn>
            <Btn $disabled>Help</Btn>
          </DialogButtons>
        </Dialog>

        <CursorMark width="14" height="21" viewBox="0 0 14 21">
          <path d="M1.5 1 V16 L5 13 L7.5 19 L10 18 L7.5 12.5 H12 Z" fill="#fff" stroke="#000" />
        </CursorMark>
      </Viewer>
    </>
  );
}
